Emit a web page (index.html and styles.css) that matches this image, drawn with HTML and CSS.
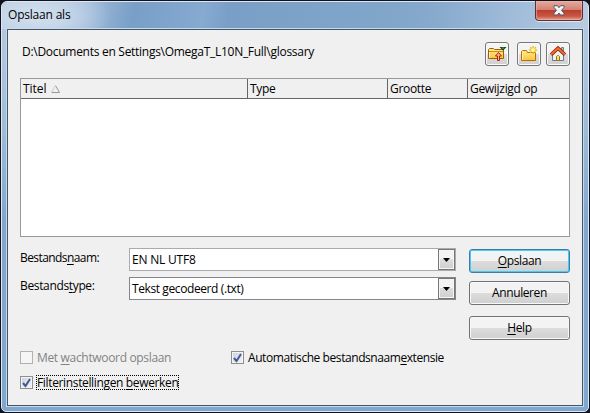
FILE: index.html
```html
<!DOCTYPE html>
<html lang="nl">
<head>
<meta charset="utf-8">
<title>Opslaan als</title>
<link rel="stylesheet" href="styles.css">
</head>
<body>
<div class="window">
  <header class="titlebar">
    <span class="title">Opslaan als</span>
    <button class="close" aria-label="Sluiten"><svg width="12" height="11" viewBox="0 0 12 11"><path d="M1 .7h3.400L6 2.700 7.600.7H11v1.800L8.500 5.300 11 8.200V10H7.600L6 8 4.400 10H1V8.200l2.500-2.900L1 2.500z" fill="#f4f4f6" stroke="#545a70"/></svg></button>
  </header>
  <main class="client">
    <div class="location">
      <span class="path">D:\Documents en Settings\OmegaT_L10N_Full\glossary</span>
      <div class="tools">
        <button class="tool"><svg width="20" height="18" viewBox="0 0 20 18">
          <defs><linearGradient id="folder" x2="0" y2="1"><stop stop-color="#ffef8e"/><stop offset="1" stop-color="#fdc33b"/></linearGradient></defs>
          <path d="M1.500 13.500v-9l1-1h4l1 1h9v9z" fill="url(#folder)" stroke="#a35a0c"/><path d="M2.500 7v6" stroke="#fff1a6" fill="none"/><path d="M2 6.500h14" stroke="#c98a22"/>
          <path d="M11.500 7.500l3 3.500h-2V15.500h-2V11h-2z" fill="#ffb48a" stroke="#a82608"/>
          <path d="M12.500 2h7L16 5.500z" fill="#123817"/><path d="M14.500 2.500h3L16 4.200z" fill="#12d52b"/></svg></button>
        <button class="tool"><svg width="20" height="18" viewBox="0 0 20 18">
          <path d="M2.500 15.500v-9l1-1h4l1 2h8v8z" fill="url(#folder)" stroke="#b96b08"/><path d="M3.500 7v8" stroke="#fff1a6"/>
          <path d="M14 1v8M10 5h8M11.200 2.200l5.600 5.600M16.800 2.200l-5.600 5.600" stroke="#edb91e" stroke-width="1.400"/><circle cx="14" cy="5" r="2" fill="#fff7a8"/></svg></button>
        <button class="tool"><svg width="20" height="18" viewBox="0 0 20 18">
          <path d="M13.500 2.500h2v5h-2z" fill="#b6bdc7" stroke="#777f8b"/>
          <path d="M4.500 8.500L10 3.500l5.500 5v7h-11z" fill="#edf3f8" stroke="#6d7884"/>
          <path d="M8.500 15.500v-4l1-1h1l1 1v4z" fill="#ffe15c" stroke="#927326"/>
          <path d="M3 9.800l7-6.500 7 6.500" fill="none" stroke="#8e2608" stroke-width="3.600"/><path d="M3 9.500l7-6.300 7 6.300" fill="none" stroke="#f46d2b" stroke-width="1.900"/></svg></button>
      </div>
    </div>
    <div class="filelist">
      <div class="columns">
        <div class="name">Titel<svg class="sort" width="9" height="8" viewBox="0 0 9 8"><path d="M4.500.5l4 7H.5" fill="none" stroke="#999"/><path d="M.5 7.500L4.500.5" stroke="#ccc"/></svg></div>
        <div>Type</div><div>Grootte</div><div class="modified">Gewijzigd op</div>
      </div>
    </div>
    <div class="form">
      <div class="labels"><label class="lname">Bestands<u>n</u>aam:</label><label class="ltype">Bestands<u>t</u>ype:</label></div>
      <div class="fields">
        <div class="combo"><span class="fname">EN NL UTF8</span><button class="drop"><svg width="7" height="4" viewBox="0 0 7 4"><path d="M0 0h7L3.500 4z"/></svg></button></div>
        <div class="combo type"><span class="ftype">Tekst gecodeerd (.txt)</span><button class="drop"><svg width="7" height="4" viewBox="0 0 7 4"><path d="M0 0h7L3.500 4z"/></svg></button></div>
      </div>
      <div class="actions">
        <button class="push default"><span><u>O</u>pslaan</span></button>
        <button class="push"><span>Annuleren</span></button>
        <button class="push help"><span><u>H</u>elp</span></button>
      </div>
    </div>
    <div class="options">
      <div class="option disabled"><i class="box"></i><span class="text pw">Met <u>w</u>achtwoord opslaan</span></div>
      <div class="option"><i class="box"><svg width="9" height="10" viewBox="0 0 9 10"><path d="M1 5l2.500 3L8 1" fill="none" stroke="#435b9d" stroke-width="2"/></svg></i><span class="text ext">Automatische bestandsnaam<u>e</u>xtensie</span></div>
      <div class="option"><i class="box"><svg width="9" height="10" viewBox="0 0 9 10"><path d="M1 5l2.500 3L8 1" fill="none" stroke="#435b9d" stroke-width="2"/></svg></i><span class="text focus">Filterinstellingen <u>b</u>ewerken</span></div>
    </div>
  </main>
</div>
</body>
</html>
```
FILE: styles.css
```css
* { box-sizing: border-box; }
body { margin: 0; width: 590px; height: 413px; padding: 1px; overflow: hidden; background: #11121d; color: #000; font: 12px/16px "Open Sans", "Noto Sans", sans-serif; letter-spacing: -.3px; white-space: nowrap; }
button { margin: 0; padding: 0; font: inherit; letter-spacing: inherit; color: inherit; }
svg { display: block; flex: none; }
u { text-decoration-thickness: 1px; text-underline-offset: 2px; text-decoration-skip-ink: none; }
.window { width: 588px; height: 411px; padding: 0 5px; border: 1px solid #dce9f5; border-radius: 6px 6px 5px 5px; background: linear-gradient(#b4cae1 0, #a9c2dc 90px, #82a7cd 220px, #80a7d0 100%); }
.titlebar { display: flex; justify-content: space-between; height: 27px; margin: 0 -5px; padding: 0 5px 0 6px; border-radius: 5px 5px 0 0; background: radial-gradient(ellipse 75px 36px at 35px 14px, #d3e0ee, #d3e0eeaa 40%, #d3e0ee00 100%), linear-gradient(100deg, #b1c7df 0, #a3bedb 80px, #789fc7 132px, #86aad0 200px, #7a9fc6 225px, #80a6ca 385px, #87aacd 430px, #a4bfdb 520px, #b9cce0 100%); }
.title { padding-top: 5px; letter-spacing: -.2px; }
.close { display: flex; justify-content: center; padding-top: 4px; width: 48px; height: 20px; margin-top: -1px; border: 1px solid #622e35; border-top: 0; border-radius: 0 0 4px 4px; background: linear-gradient(#e5aaa0 0, #d58273 45%, #b9402e 50%, #c95743 80%, #e5a294); box-shadow: inset 0 0 0 1px #edb9af88, 0 1px 0 #dce8f4; }
.client { width: 576px; height: 377px; border: 1px solid #455765; padding: 12px; background: #f0f0f0; box-shadow: 0 0 0 1px #c4d9ed; }
.location { display: flex; justify-content: space-between; height: 24px; }
.path { margin-left: 2px; padding-top: 2px; letter-spacing: -.28px; }
.tools { display: flex; }
.tool { width: 24px; height: 24px; display: grid; place-items: center; border: 1px solid #777; border-radius: 3px; background: linear-gradient(#f4f4f4 0 48%, #dedede 50%, #d0d0d0); box-shadow: inset 0 0 0 1px #fafafa; }
.tool + .tool { margin-left: 8px; }
.tool + .tool + .tool { margin-left: 5px; }
.filelist { width: 550px; height: 159px; margin-top: 12px; border: 1px solid #999; background: #fff; }
.columns { display: grid; grid-template-columns: 227px 140px 80px 101px; height: 20px; border-bottom: 1px solid #666; background: #f0f0f0; }
.columns div { padding: 2px 0 0 2px; border-right: 1px solid #666; }
.columns .modified { border: 0; }
.columns .name { display: flex; letter-spacing: -.05px; }
.sort { margin: 4px 0 0 5px; }
.form { display: grid; grid-template-columns: 109px 327px 101px; height: 103px; margin-top: 11px; }
.actions { margin-left: 13px; width: 101px; }
.labels { display: flex; flex-direction: column; gap: 12px; padding-top: 2px; letter-spacing: -.58px; }
.ltype { letter-spacing: -.35px; }
.combo { display: flex; justify-content: space-between; width: 327px; height: 23px; padding: 0 0 0 2px; border: 1px solid #aaabb0; background: #fff; }
.combo span { padding-top: 3px; }
.fname { letter-spacing: -.2px; }
.combo.type { margin-top: 6px; border-color: #85858f; letter-spacing: -.4px; }
.drop { display: grid; place-items: center; width: 17px; height: 21px; border: 1px solid #777; background: linear-gradient(#f3f3f3 0 48%, #ddd 50%, #cfcfcf); box-shadow: inset 0 0 0 1px #f5f5f5; }
.push { display: grid; place-items: center; width: 101px; height: 24px; margin: 0 0 8px; border: 1px solid #727272; border-radius: 3px; background: linear-gradient(#f3f3f3 0 48%, #ddd 50%, #cfcfcf); box-shadow: inset 0 0 0 1px #f8f8f8; letter-spacing: -.4px; }
.push.default { margin-top: 1px; border-color: #3b7cad; box-shadow: inset 0 0 0 1px #43cdf5; }
.push.help { margin-top: 11px; }
.options { display: grid; grid-template-columns: 211px 1fr; row-gap: 12px; }
.option { display: flex; align-items: center; height: 13px; }
.box { display: grid; place-items: center; width: 13px; height: 13px; border: 1px solid #8e8f8f; background: linear-gradient(135deg, #cbd0d8, #f5f5f5); box-shadow: inset 0 0 0 1px #f4f4f4; }
.text { margin-left: 4px; }
.ext { letter-spacing: -.43px; }
.pw { letter-spacing: -.33px; }
.disabled { color: #838383; }
.disabled .box { border-color: #b1b1b1; background: #f5f5f5; }
.focus { margin-left: 3px; height: 15px; line-height: 13px; border: 1px dotted #000; letter-spacing: -.35px; }
```
